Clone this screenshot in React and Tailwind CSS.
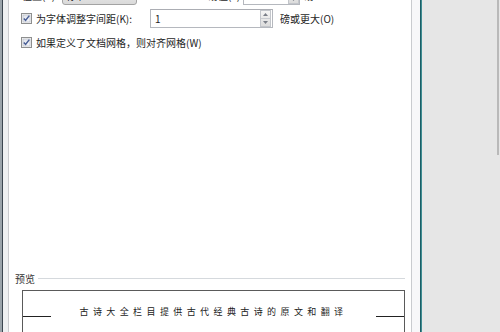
import React from 'react';

const font = { fontFamily: '"Noto Sans CJK SC", "Microsoft YaHei", sans-serif' };

const CheckBox = () => (
    <svg width="11" height="11" viewBox="0 0 11 11" className="shrink-0">
        <defs>
            <linearGradient id="cbg" x1="0" y1="0" x2="1" y2="1">
                <stop offset="0" stopColor="#dfe3ea" />
                <stop offset="1" stopColor="#f7f8fb" />
            </linearGradient>
        </defs>
        <rect x="0.5" y="0.5" width="10" height="10" fill="#f4f4f4" stroke="#8e8f8f" />
        <rect x="2" y="2" width="7" height="7" fill="url(#cbg)" stroke="#b4b9c2" strokeWidth="0.6" />
        <path d="M2.8 5.4 L4.6 7.4 L8.3 2.6" fill="none" stroke="#4a5f96" strokeWidth="1.5" />
    </svg>
);

const Spinner = ({ className }) => (
    <div className={`flex flex-col w-[11px] border border-[#c3c6cb] bg-gradient-to-b from-[#f5f5f5] to-[#dcdcdc] ${className}`}>
        <div className="flex-1 flex items-center justify-center border-b border-[#c9ccd1]">
            <svg width="5" height="3" viewBox="0 0 5 3"><path d="M0 3 L2.5 0 L5 3Z" fill="#7a7f88" /></svg>
        </div>
        <div className="flex-1 flex items-center justify-center">
            <svg width="5" height="3" viewBox="0 0 5 3"><path d="M0 0 L2.5 3 L5 0Z" fill="#7a7f88" /></svg>
        </div>
    </div>
);

const App = () => {
    return (
        <div className="w-[500px] h-[332px] overflow-hidden flex bg-white text-[#1e1e1e]" style={font}>
            {/* left window frame */}
            <div className="w-[2px] bg-[#9aa4ab]" />
            <div className="w-px bg-[#3a4650]" />
            <div className="w-[5px] bg-[#eef0f2]" />

            {/* tab page */}
            <div className="w-[404px] shrink-0 border-l border-r border-[#c9cbcf] bg-white flex flex-col text-[10px] leading-[13px]">
                {/* 位置 row, mostly cut off */}
                <div className="flex items-center h-[20px] mt-[-15px]">
                    <span className="ml-[13px] w-[40px]">位置(P):</span>
                    <div className="w-[75px] h-[20px] rounded-[3px] border border-[#a3a3a3] bg-gradient-to-b from-[#f0f0f0] to-[#dadada] flex items-center pl-[3px]">
                        标准
                    </div>
                    <span className="ml-[71px] w-[35px]">磅值(Y):</span>
                    <div className="w-[57px] h-[20px] border border-[#b5b8be] bg-white flex justify-end">
                        <Spinner className="h-full" />
                    </div>
                    <span className="ml-[4px]">磅</span>
                </div>

                {/* 字间距 row */}
                <div className="flex items-center h-[19px] mt-[4px]">
                    <div className="ml-[12px] mr-[4px]">
                        <CheckBox />
                    </div>
                    <span className="w-[114px]">为字体调整字间距(K):</span>
                    <div className="w-[123px] h-[19px] border border-[#b5b8be] border-t-[#abadb3] bg-white flex items-center justify-between">
                        <span className="pl-[4px]">1</span>
                        <Spinner className="h-[17px] mr-px" />
                    </div>
                    <span className="ml-[7px]">磅或更大(O)</span>
                </div>

                {/* 文档网格 row */}
                <div className="flex items-center h-[16px] mt-[8px]">
                    <div className="ml-[12px] mr-[4px]">
                        <CheckBox />
                    </div>
                    <span>如果定义了文档网格，则对齐网格(W)</span>
                </div>

                {/* preview */}
                <div className="flex items-center h-[13px] mt-[223px]">
                    <span className="ml-[6px] mr-[3px] text-[#333]">预览</span>
                    <div className="flex-1 mr-[6px] border-t border-[#d5d9dd] border-b border-b-white" />
                </div>
                <div className="ml-[13px] mr-[6px] mt-[5px] h-[60px] border border-[#5a5a5a] border-b-0">
                    <div className="flex items-center justify-between h-[12px] mt-[15px]">
                        <div className="w-[28px] h-px bg-[#222] self-end mb-px" />
                        <span className="text-[9px] leading-[12px] tracking-[4.4px] text-[#222]">
                            古诗大全栏目提供古代经典古诗的原文和翻译
                        </span>
                        <div className="w-[28px] h-px bg-[#222] self-end mb-px" />
                    </div>
                </div>
            </div>

            {/* dialog edge */}
            <div className="w-[8px] bg-[#f7f7f9]" />
            <div className="w-px bg-[#1b5e66]" />
            <div className="w-px bg-[#3f8c92]" />

            {/* background window */}
            <div className="flex-1 bg-[#e6e6e6] flex justify-end">
                <div className="w-[2px] h-[155px] bg-[#b9b9b9] mr-px" />
            </div>
        </div>
    );
};

export default App;
